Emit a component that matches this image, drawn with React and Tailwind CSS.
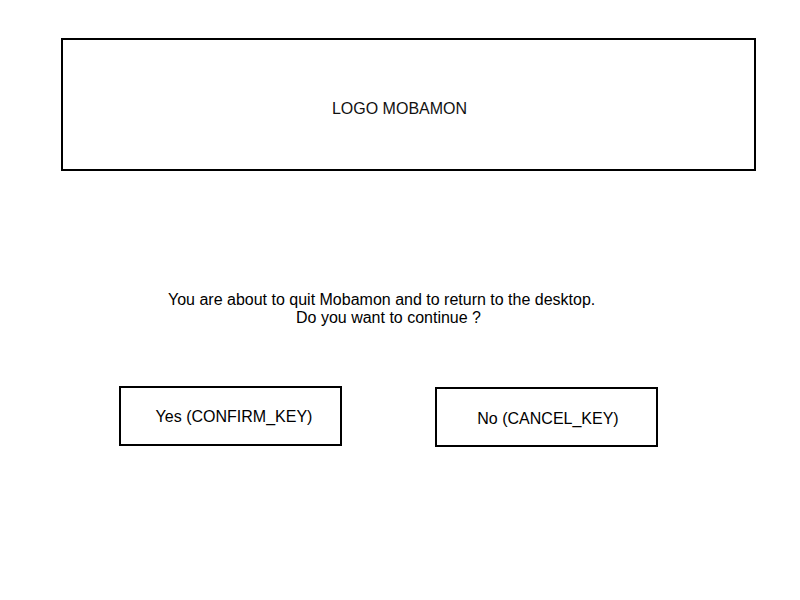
import React from "react";

function KeyButton({ label, className }) {
  return (
    <div
      className={`flex h-[60px] w-[223px] items-center justify-center border-2 border-black ${className}`}
    >
      {label}
    </div>
  );
}

export default function App() {
  return (
    <div className="h-[600px] w-[800px] overflow-hidden bg-white font-['Liberation_Sans',Arial,sans-serif] text-[16px] leading-[18px] text-black">
      <div className="ml-[61px] mt-[38px] flex h-[133px] w-[695px] items-center justify-center border-2 border-black pr-[18px] pt-[8px] text-[#111]">
        LOGO MOBAMON
      </div>

      <div className="mt-[120px]">
        <div className="ml-[168px]">
          You are about to quit Mobamon and to return to the desktop.
        </div>
        <div className="ml-[296px]">Do you want to continue ?</div>
      </div>

      <div className="ml-[119px] mt-[59px] flex items-start gap-[93px]">
        <KeyButton label="Yes (CONFIRM_KEY)" className="pl-[7px] pt-[2px]" />
        <KeyButton label="No (CANCEL_KEY)" className="mt-[1px] pl-[3px] pt-[4px]" />
      </div>
    </div>
  );
}
